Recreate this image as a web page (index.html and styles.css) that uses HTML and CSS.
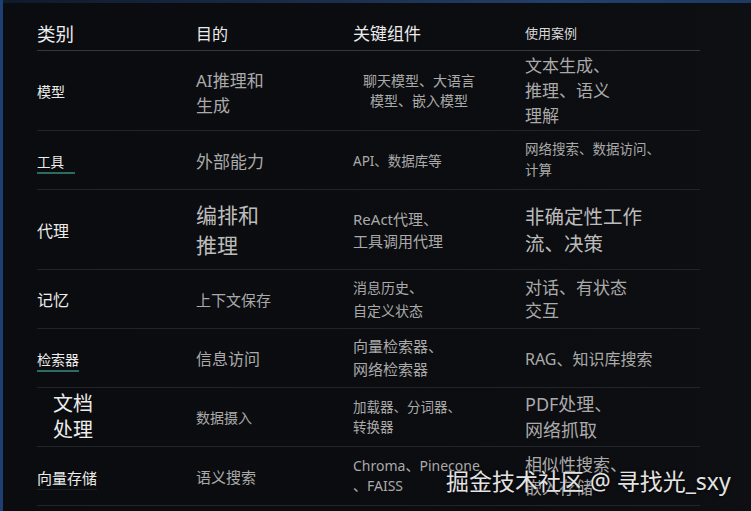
FILE: index.html
```html
<!DOCTYPE html>
<html lang="zh-CN">
<head>
<meta charset="utf-8">
<title>组件表</title>
<link rel="stylesheet" href="styles.css">
</head>
<body>
<div class="frame">
  <div class="topbar"></div>
  <div class="table">
    <div class="row head">
      <div class="cell"><span class="h18 white">类别</span></div>
      <div class="cell"><span class="h16 white">目的</span></div>
      <div class="cell"><span class="h17 white">关键组件</span></div>
      <div class="cell"><span class="h13 white">使用案例</span></div>
    </div>
    <div class="row tall">
      <div class="cell"><span class="t14 white">模型</span></div>
      <div class="cell"><span class="t17 lh25 down">AI推理和<br>生成</span></div>
      <div class="cell"><span class="t14 lh20 center indent">聊天模型、大语言<br>模型、嵌入模型</span></div>
      <div class="cell"><span class="t17 lh25">文本生成、<br>推理、语义<br>理解</span></div>
    </div>
    <div class="row">
      <div class="cell"><span class="t13 white mark teal">工具</span></div>
      <div class="cell"><span class="t17">外部能力</span></div>
      <div class="cell"><span class="t13">API、数据库等</span></div>
      <div class="cell"><span class="t13 lh21">网络搜索、数据访问、<br>计算</span></div>
    </div>
    <div class="row tall">
      <div class="cell"><span class="t16 white">代理</span></div>
      <div class="cell"><span class="t21 lh30 light">编排和<br>推理</span></div>
      <div class="cell"><span class="t15 lh22">ReAct代理、<br>工具调用代理</span></div>
      <div class="cell"><span class="t19 lh27 light">非确定性工作<br>流、决策</span></div>
    </div>
    <div class="row">
      <div class="cell"><span class="t16 white">记忆</span></div>
      <div class="cell"><span class="t15">上下文保存</span></div>
      <div class="cell"><span class="t14 lh23">消息历史、<br>自定义状态</span></div>
      <div class="cell"><span class="t17 lh23">对话、有状态<br>交互</span></div>
    </div>
    <div class="row">
      <div class="cell"><span class="t14 white mark teal2">检索器</span></div>
      <div class="cell"><span class="t16">信息访问</span></div>
      <div class="cell"><span class="t15 lh23">向量检索器、<br>网络检索器</span></div>
      <div class="cell"><span class="t16">RAG、知识库搜索</span></div>
    </div>
    <div class="row">
      <div class="cell"><span class="t20 lh26 white doc">文档<br>处理</span></div>
      <div class="cell"><span class="t14">数据摄入</span></div>
      <div class="cell"><span class="t13 lh20">加载器、分词器、<br>转换器</span></div>
      <div class="cell"><span class="t18 lh26">PDF处理、<br>网络抓取</span></div>
    </div>
    <div class="row">
      <div class="cell"><span class="t15 white mark faint">向量存储</span></div>
      <div class="cell"><span class="t15">语义搜索</span></div>
      <div class="cell"><span class="t14 lh20">Chroma、Pinecone<br>、FAISS</span></div>
      <div class="cell"><span class="t17 lh23">相似性搜索、<br>嵌入存储</span></div>
    </div>
  </div>
  <div class="watermark">掘金技术社区 @ 寻找光_sxy</div>
</div>
</body>
</html>
```

FILE: styles.css
```css
html, body {
  margin: 0;
  padding: 0;
  background: #0b0c0f;
}
body {
  font-family: "Noto Sans", "Noto Sans CJK SC", sans-serif;
  color: #aaaaaa;
}
.frame {
  position: relative;
  width: 751px;
  height: 511px;
  box-sizing: border-box;
  border-left: 3px solid #1d3f73;
  background: linear-gradient(to right, #0b0c0f 0%, #0c0d10 70%, #0e0f12 100%);
  overflow: hidden;
}
.topbar {
  height: 3px;
  background: linear-gradient(to right, #0f1a2b 0%, #1a2c48 40%, #22406b 75%, #1d3a62 100%);
}
.table {
  margin-left: 34px;
  width: 663px;
}
.row {
  display: grid;
  grid-template-columns: 159px 157px 172px 175px;
  height: 59px;
  box-sizing: border-box;
  border-bottom: 1px solid #232428;
}
.row.tall {
  height: 80px;
}
.row.head {
  height: 48px;
  padding-top: 12px;
  border-bottom-color: #36373b;
}
.cell {
  display: flex;
  align-items: center;
}
.white { color: #ececec; }
.light { color: #bcbcbc; }
.h18 { font-size: 18.5px; }
.h17 { font-size: 17px; }
.h16 { font-size: 16px; }
.h13 { font-size: 13px; color: #d8d8d8; }
.t13 { font-size: 13.5px; }
.t14 { font-size: 14px; }
.t15 { font-size: 15px; }
.t16 { font-size: 16px; }
.t17 { font-size: 17px; }
.t18 { font-size: 18px; }
.t19 { font-size: 19.5px; }
.t20 { font-size: 20px; }
.t21 { font-size: 21px; }
.lh20 { line-height: 20px; }
.lh21 { line-height: 21px; }
.lh22 { line-height: 22px; }
.lh23 { line-height: 23px; }
.lh25 { line-height: 25px; }
.lh26 { line-height: 26px; }
.lh27 { line-height: 27px; }
.lh30 { line-height: 30px; }
.center { text-align: center; }
.indent { margin-left: 10px; }
.down { margin-top: 4px; }
.doc { margin-left: 16px; }
.mark {
  display: inline-block;
  padding-right: 11px;
  padding-bottom: 1px;
  margin-top: 4px;
  border-bottom: 2px solid #2c6a62;
}
.mark.teal2 {
  padding-right: 0;
  border-bottom-color: #2e6a68;
}
.mark.faint {
  padding-right: 0;
  border-bottom: 1px solid #1d1e22;
}
.watermark {
  position: absolute;
  left: 443px;
  top: 470px;
  font-family: "Noto Sans", "Noto Sans CJK SC", sans-serif;
  font-size: 23px;
  line-height: 1;
  color: #e4e4e4;
  text-shadow: 0 0 3px rgba(0, 0, 0, 0.8);
  white-space: nowrap;
}
```
